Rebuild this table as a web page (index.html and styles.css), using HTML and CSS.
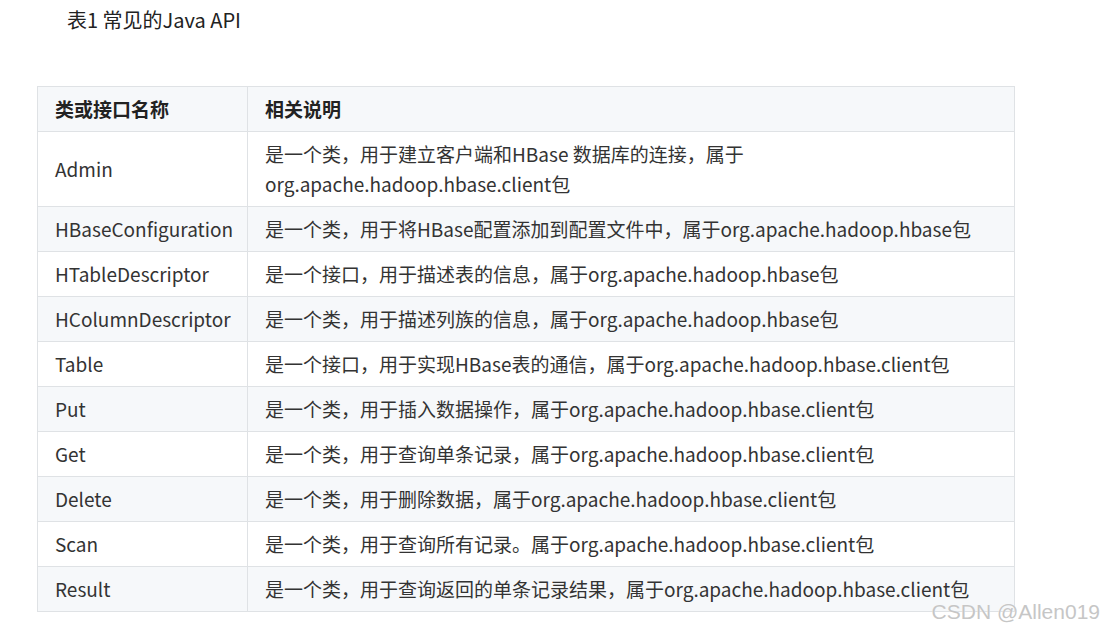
FILE: index.html
```html
<!DOCTYPE html>
<html lang="zh-CN">
<head>
<meta charset="utf-8">
<title>表1 常见的Java API</title>
<link rel="stylesheet" href="styles.css">
</head>
<body>
<div class="page">
  <p class="caption">表1 常见的Java API</p>
  <table class="api-table">
    <colgroup><col class="col-name"><col></colgroup>
    <thead>
      <tr><th>类或接口名称</th><th>相关说明</th></tr>
    </thead>
    <tbody>
      <tr><td>Admin</td><td>是一个类，用于建立客户端和HBase 数据库的连接，属于org.apache.hadoop.hbase.client包</td></tr>
      <tr><td>HBaseConfiguration</td><td>是一个类，用于将HBase配置添加到配置文件中，属于org.apache.hadoop.hbase包</td></tr>
      <tr><td>HTableDescriptor</td><td>是一个接口，用于描述表的信息，属于org.apache.hadoop.hbase包</td></tr>
      <tr><td>HColumnDescriptor</td><td>是一个类，用于描述列族的信息，属于org.apache.hadoop.hbase包</td></tr>
      <tr><td>Table</td><td>是一个接口，用于实现HBase表的通信，属于org.apache.hadoop.hbase.client包</td></tr>
      <tr><td>Put</td><td>是一个类，用于插入数据操作，属于org.apache.hadoop.hbase.client包</td></tr>
      <tr><td>Get</td><td>是一个类，用于查询单条记录，属于org.apache.hadoop.hbase.client包</td></tr>
      <tr><td>Delete</td><td>是一个类，用于删除数据，属于org.apache.hadoop.hbase.client包</td></tr>
      <tr><td>Scan</td><td>是一个类，用于查询所有记录。属于org.apache.hadoop.hbase.client包</td></tr>
      <tr><td>Result</td><td>是一个类，用于查询返回的单条记录结果，属于org.apache.hadoop.hbase.client包</td></tr>
    </tbody>
  </table>
  <div class="watermark">CSDN @Allen019</div>
</div>
</body>
</html>
```
FILE: styles.css
```css
html, body {
  margin: 0;
  padding: 0;
  background: #ffffff;
}
.page {
  position: relative;
  width: 1104px;
  height: 630px;
  overflow: hidden;
  padding: 6px 0 0 37px;
  box-sizing: border-box;
  font-family: "Noto Sans CJK SC", "Noto Sans", sans-serif;
  color: #333333;
}
.caption {
  margin: 0 0 52px 30px;
  font-size: 20px;
  line-height: 28px;
  color: #222222;
}
.api-table {
  border-collapse: collapse;
  table-layout: fixed;
  width: 978px;
  font-size: 19px;
  line-height: 30px;
}
.api-table .col-name {
  width: 210px;
}
.api-table th,
.api-table td {
  border: 1px solid #dfe2e5;
  padding: 7px 17px;
  text-align: left;
  vertical-align: middle;
  white-space: normal;
}
.api-table th {
  font-weight: bold;
  color: #222222;
  background: #f6f8fa;
}
.api-table tbody tr:nth-child(even) td {
  background: #f6f8fa;
}
.watermark {
  position: absolute;
  right: 4px;
  bottom: 6px;
  font-family: "Liberation Sans", Arial, sans-serif;
  font-size: 21px;
  line-height: 24px;
  color: #c6c6c6;
  text-shadow: 0 0 1px #ffffff;
}
```
